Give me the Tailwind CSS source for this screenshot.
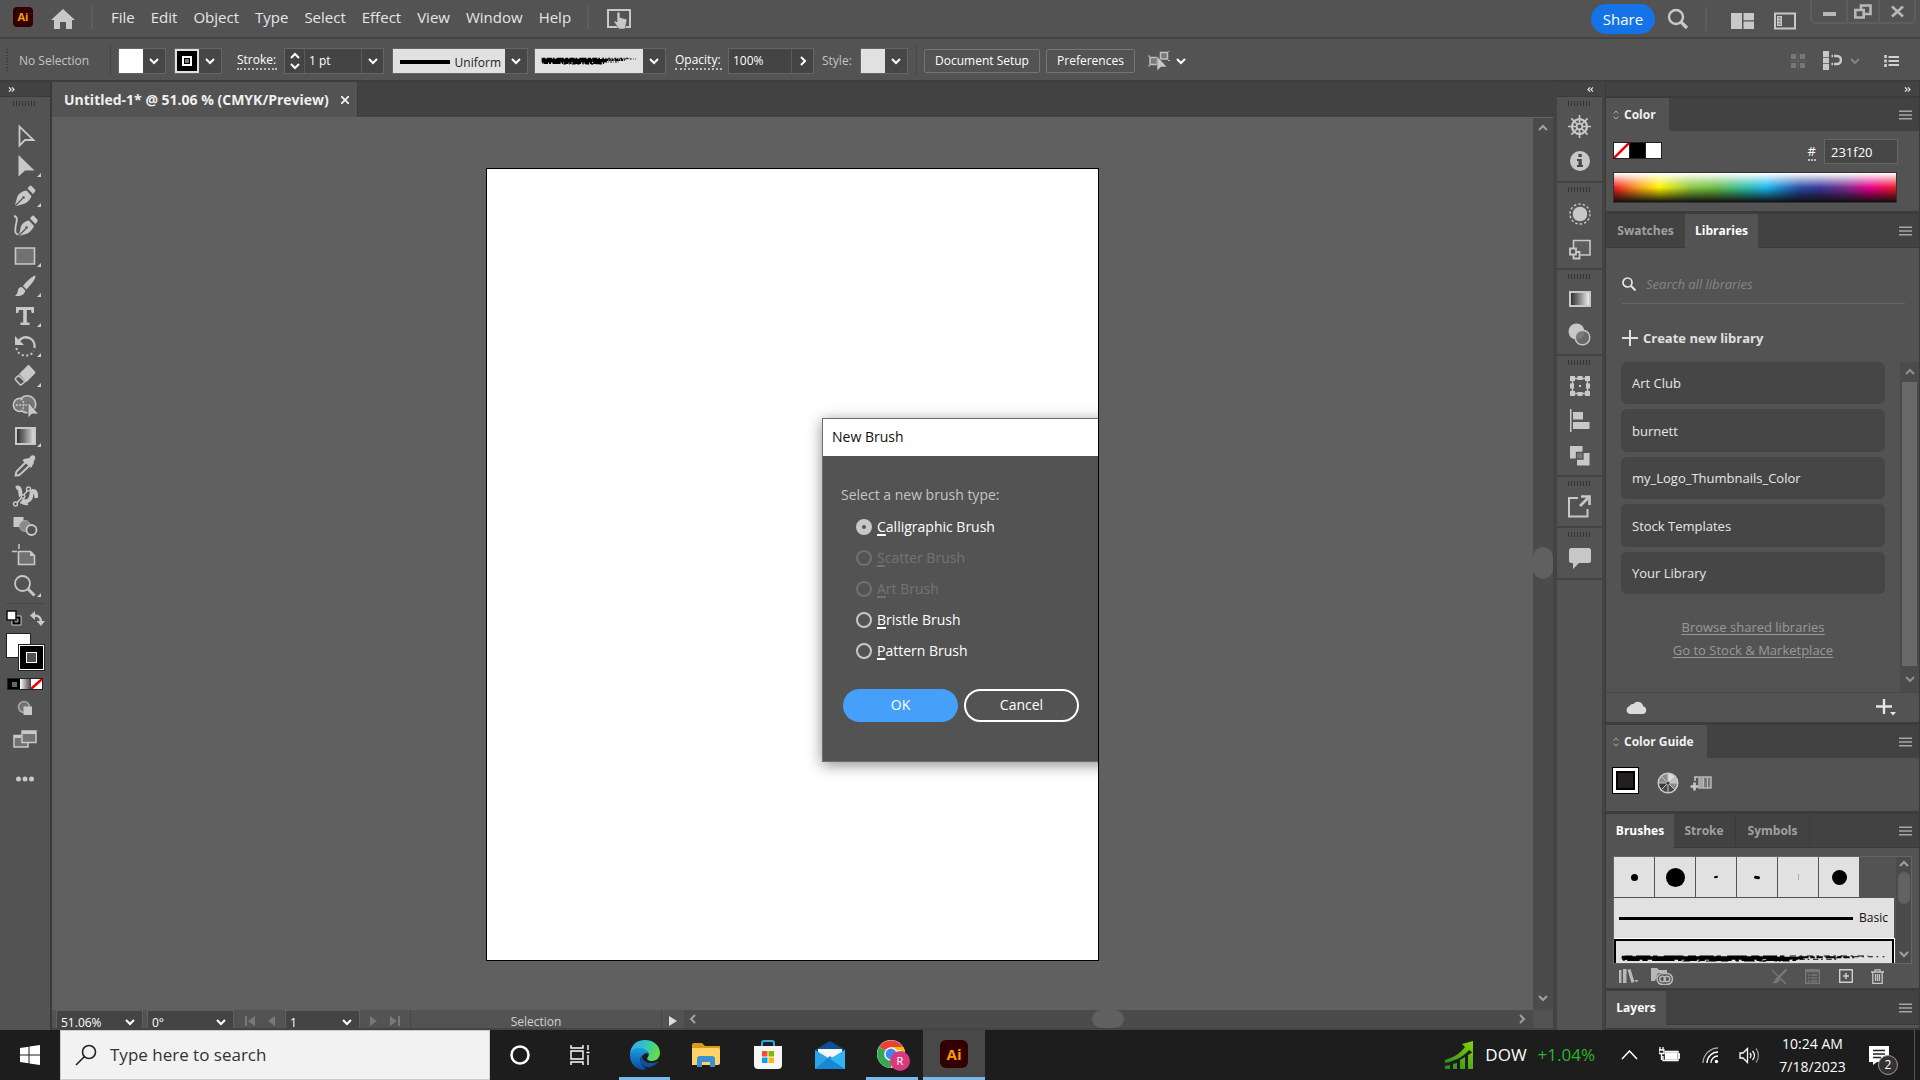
<!DOCTYPE html>
<html lang="en">
<head>
  <meta charset="UTF-8" />
  <meta name="viewport" content="width=device-width, initial-scale=1" />
  <title>Untitled-1* @ 51.06 % (CMYK/Preview)</title>
  <script src="https://cdn.jsdelivr.net/npm/@tailwindcss/browser@4"></script>
</head>
<body class="h-screen overflow-hidden flex flex-col bg-[#535353] text-[#e6e6e6] text-[13px] leading-5 font-['Open_Sans','Noto_Sans',sans-serif]">

  <!-- Shared icons -->
  <svg class="hidden">
    <symbol id="down" viewBox="0 0 10 10"><path d="M1 3l4 4 4-4" fill="none" stroke="currentColor" stroke-width="2"/></symbol>
    <symbol id="up" viewBox="0 0 10 10"><path d="M1 7l4-4 4 4" fill="none" stroke="currentColor" stroke-width="2"/></symbol>
    <symbol id="right" viewBox="0 0 10 10"><path d="M3 1l4 4-4 4" fill="none" stroke="currentColor" stroke-width="2"/></symbol>
    <symbol id="left" viewBox="0 0 10 10"><path d="M7 1L3 5l4 4" fill="none" stroke="currentColor" stroke-width="2"/></symbol>
    <symbol id="dright" viewBox="0 0 8 6"><path d="M1 .5L3.500 3 1 5.500M4.500 .5L7 3 4.500 5.500" fill="none" stroke="currentColor" stroke-width="1.500"/></symbol>
    <symbol id="dleft" viewBox="0 0 8 6"><path d="M3.500 .5L1 3l2.500 2.500M7 .5L4.500 3 7 5.500" fill="none" stroke="currentColor" stroke-width="1.500"/></symbol>
    <symbol id="burger" viewBox="0 0 14 10"><path d="M0 1h14M0 5h14M0 9h14" stroke="currentColor" stroke-width="1.500"/></symbol>
    <symbol id="sort" viewBox="0 0 6 10"><path d="M.7 3.500L3 1l2.300 2.500M.7 6.500L3 9l2.300-2.500" fill="none" stroke="currentColor"/></symbol>
    <symbol id="charcoal" viewBox="0 0 300 12" preserveAspectRatio="none">
      <g stroke="#000" fill="none">
        <path d="M4 6H160" stroke-width="5"/>
        <path d="M2 4l5 2-4 3M160 6h45" stroke-width="4"/>
        <path d="M5 3.500H190" stroke-width="2.500" stroke-dasharray="9 4 16 3 5 7 22 5"/>
        <path d="M8 9H200" stroke-width="3" stroke-dasharray="14 3 6 5 25 4 4 3"/>
        <path d="M70 10.500H190" stroke-width="1.500" stroke-dasharray="8 9 3 6 12 5"/>
        <path d="M200 5H262" stroke-width="3" stroke-dasharray="11 2 5 2 7 3"/>
        <path d="M190 3H278" stroke-width="1.500" stroke-dasharray="7 4 3 5"/>
        <path d="M186 8H245" stroke-width="1.500" stroke-dasharray="6 3 2 4"/>
        <path d="M262 4H296" stroke-width="1.500" stroke-dasharray="5 4 2 5"/>
        <path d="M160 11l12-5M178 11l10-5M195 10l8-5M240 7l8-4" stroke-width="1.500"/>
      </g>
    </symbol>
  </svg>

  <!-- Menu bar -->
  <header class="h-[39px] shrink-0 flex border-b-2 border-[#434343]">
    <div class="flex items-center pb-1 pl-[13px]">
      <div class="size-5 rounded bg-[#330000] text-[#ff9a00] text-[11px] font-bold flex items-center justify-center">Ai</div>
      <button class="ml-[18px]" aria-label="Home">
        <svg class="w-6 h-5 mt-1" viewBox="0 0 24 20" fill="#c8c8c8"><path d="M12 0L0 11h3v9h6v-7h6v7h6v-9h3z"/></svg>
      </button>
      <div class="w-0.5 h-6 bg-[#5e5e5e] ml-4 mr-[18px]"></div>
      <nav class="flex gap-4 text-[15px]">
        <a href="#">File</a><a href="#">Edit</a><a href="#">Object</a><a href="#">Type</a><a href="#">Select</a><a href="#">Effect</a><a href="#">View</a><a href="#">Window</a><a href="#">Help</a>
      </nav>
      <div class="w-0.5 h-6 bg-[#5e5e5e] ml-4 mr-[18px]"></div>
      <button aria-label="Touch workspace">
        <svg class="w-6 h-5 mt-1" viewBox="0 0 24 20"><path d="M1 1h22v17H1z" fill="none" stroke="#c8c8c8" stroke-width="2"/><path d="M10 4.500c0-2 3-2 3 0v4l6 1.500c1 .3 1 1 .8 2L18 20h-6L7 13c0-1.500 2-1.500 3 0z" fill="#c8c8c8" stroke="#535353" stroke-width=".6"/></svg>
      </button>
    </div>
    <div class="ml-auto flex">
      <div class="flex items-center">
        <button class="h-[30px] w-16 rounded-full bg-[#1473e6] text-white text-[15px]">Share</button>
        <button class="ml-3" aria-label="Search"><svg class="size-[22px]" viewBox="0 0 22 22" fill="none" stroke="#c8c8c8"><circle cx="9" cy="9" r="7" stroke-width="2.400"/><path d="M14 14l6 6" stroke-width="3.200"/></svg></button>
        <div class="w-0.5 h-6 bg-[#5e5e5e] ml-4 mr-6"></div>
        <button aria-label="Arrange documents"><svg class="w-[23px] h-4 mt-1" viewBox="0 0 23 16" fill="#c8c8c8"><path d="M0 0h11v16H0zM12.500 0H23v7.200H12.500zM12.500 8.600H23V16H12.500z"/></svg></button>
        <button class="ml-5" aria-label="Workspace"><svg class="w-[22px] h-[18px] mt-1" viewBox="0 0 22 18"><path d="M1 1.500h20v15H1z" fill="none" stroke="#c8c8c8" stroke-width="2"/><path d="M3 4h5v10H3z" fill="#c8c8c8"/><path d="M4.300 6h2.400M4.300 9h2.400M4.300 12h2.400" stroke="#535353" stroke-width="1.200"/></svg></button>
      </div>
      <div class="ml-3.5 mr-1 h-6 flex border-2 border-t-0 border-[#5e5e5e] rounded-b-md text-[#b8b8b8]">
        <button class="w-[34px] flex justify-center items-center" aria-label="Minimize"><svg class="w-[13px] h-3" viewBox="0 0 13 12"><path d="M0 9h13" stroke="currentColor" stroke-width="4"/></svg></button>
        <button class="w-[34px] flex justify-center items-center border-x-2 border-[#5e5e5e]" aria-label="Restore"><svg class="w-[18px] h-[15px]" viewBox="0 0 18 15" fill="none" stroke="currentColor" stroke-width="2.600"><path d="M1.300 6h8.400v7.500H1.300zM7 5V1.500h9.500V10H11"/></svg></button>
        <button class="w-[34px] flex justify-center items-center" aria-label="Close"><svg class="size-[13px]" viewBox="0 0 13 12" stroke="currentColor" stroke-width="2.600"><path d="M1 1l11 10M12 1L1 11"/></svg></button>
      </div>
    </div>
  </header>

  <!-- Control bar -->
  <div class="h-[43px] shrink-0 flex items-center pt-0.5 text-[12px] border-b-2 border-[#3c3c3c]">
    <div class="w-0.5 h-6 ml-1.5 bg-[repeating-linear-gradient(180deg,#3a3a3a_0_1px,transparent_1px_3px)]"></div>
    <span class="ml-[11px] w-[91px] text-[#c4c4c4]">No Selection</span>
    <div class="w-px h-8 bg-[#474747]"></div>
    <button class="ml-[7px] h-[26px] flex border border-[#656565] bg-[#474747] text-white" aria-label="Fill">
      <span class="w-6 h-full bg-white"></span><span class="w-[22px] h-full flex items-center justify-center"><svg class="size-2.5"><use href="#down"/></svg></span>
    </button>
    <button class="ml-2 h-[26px] flex border border-[#656565] bg-[#474747] text-white" aria-label="Stroke color">
      <span class="w-6 h-full bg-black border-2 border-[#e0e0e0] flex items-center justify-center"><span class="size-[10px] border-2 border-white bg-black flex items-center justify-center"><span class="size-1 bg-[#777]"></span></span></span><span class="w-[22px] h-full flex items-center justify-center"><svg class="size-2.5"><use href="#down"/></svg></span>
    </button>
    <label for="stroke" class="ml-[15px] w-10 text-white border-b-2 border-dotted border-[#bdbdbd] leading-4">Stroke:</label>
    <div class="ml-[7px] h-[26px] flex border border-[#656565] bg-[#444] text-white">
      <button class="w-5 flex flex-col items-center justify-between py-0.5 border-r border-[#5a5a5a]" aria-label="Step weight"><svg class="size-2.5"><use href="#up"/></svg><svg class="size-2.5"><use href="#down"/></svg></button>
      <input id="stroke" class="w-14 px-1 outline-none" value="1 pt" />
      <button class="w-[22px] flex items-center justify-center border-l border-[#5a5a5a]" aria-label="Weight list"><svg class="size-2.5"><use href="#down"/></svg></button>
    </div>
    <button class="ml-2 h-[26px] flex border border-[#656565] bg-[#474747] text-white">
      <span class="w-28 h-full pl-[7px] pr-1 flex items-end justify-between bg-[#e1e1e1] text-[#222]"><span class="w-[50px] h-1 mb-[9px] bg-black"></span>Uniform</span><span class="w-[22px] h-full flex items-center justify-center"><svg class="size-2.5"><use href="#down"/></svg></span>
    </button>
    <button class="ml-1.5 h-[26px] flex border border-[#656565] bg-[#474747] text-white" aria-label="Brush definition">
      <span class="w-[108px] h-full px-1.5 flex items-center bg-[#e1e1e1]"><svg class="w-24 h-[9px]"><use href="#charcoal"/></svg></span><span class="w-[22px] h-full flex items-center justify-center"><svg class="size-2.5"><use href="#down"/></svg></span>
    </button>
    <label for="opacity" class="ml-[9px] w-[47px] text-white border-b-2 border-dotted border-[#bdbdbd] leading-4">Opacity:</label>
    <div class="ml-1.5 h-[26px] flex border border-[#656565] bg-[#444] text-white">
      <input id="opacity" class="w-[62px] px-1 outline-none" value="100%" />
      <button class="w-[22px] flex items-center justify-center border-l border-[#5a5a5a]" aria-label="Opacity slider"><svg class="size-2.5"><use href="#right"/></svg></button>
    </div>
    <span class="ml-2 w-[38px] text-[#c4c4c4]">Style:</span>
    <button class="h-[26px] flex border border-[#656565] bg-[#474747] text-white" aria-label="Graphic style">
      <span class="w-6 h-full bg-[#e1e1e1]"></span><span class="w-[22px] h-full flex items-center justify-center"><svg class="size-2.5"><use href="#down"/></svg></span>
    </button>
    <div class="w-px h-8 bg-[#474747] ml-2 mr-[7px]"></div>
    <button class="h-6 w-[116px] border border-[#757575] rounded-xs text-white">Document Setup</button>
    <button class="ml-1.5 h-6 w-[89px] border border-[#757575] rounded-xs text-white">Preferences</button>
    <button class="ml-[13px] flex items-center gap-1.5 text-white" aria-label="Select similar">
      <svg class="w-[22px] h-5" viewBox="0 0 22 20"><g fill="#7a7a7a" stroke="#c0c0c0" stroke-width="1.500"><path d="M2 6.500h7v7H2zM12.500 1.500h7v6.500h-7z"/></g><path d="M0 5h2M0 15h2M20 0h2M20 9.500h2" stroke="#c0c0c0"/><path d="M9 5v15l4-4h6z" fill="#c8c8c8" stroke="#535353" stroke-width=".6"/></svg>
      <svg class="size-2.5"><use href="#down"/></svg>
    </button>
    <div class="ml-auto mr-[21px] flex items-center">
      <svg class="size-[18px]" viewBox="0 0 18 18" fill="#777"><path d="M2 2h5v5H2zM11 2h5v5h-5zM2 11h5v5H2zM11 11h5v5h-5z"/><path d="M9 0v18M0 9h18" stroke="#676767"/></svg>
      <svg class="ml-4 w-[19px] h-[19px]" viewBox="0 0 19 19" fill="#c8c8c8"><path d="M0 0h6v6H0zM0 6.700h6v5.600H0zM0 13h6v6H0z"/><path d="M8.500 5H14a4 4 0 0 1 0 8H8.500" fill="none" stroke="#c8c8c8" stroke-width="2.600"/><path d="M10.500 3v4M10.500 11v4" stroke="#535353"/></svg>
      <svg class="ml-2 size-2.5 text-[#858585]"><use href="#down"/></svg>
      <svg class="ml-6 w-[15px] h-3" viewBox="0 0 15 12" fill="none" stroke="#d0d0d0"><path d="M4.500 2H15M4.500 6H15M4.500 10H15" stroke-width="1.800"/><path d="M1.500 0v12" stroke-width="2.600" stroke-dasharray="3 1.500"/></svg>
    </div>
  </div>

  <main class="flex-1 min-h-0 flex">

    <!-- Tools -->
    <aside class="w-[52px] shrink-0 flex flex-col items-center border-r-2 border-[#3a3a3a]">
      <div class="w-full h-[15px] flex items-center pl-2 bg-[#434343] border-b border-[#3a3a3a]"><svg class="w-[7px] h-[5px] text-[#ddd]"><use href="#dright"/></svg></div>
      <div class="w-6 h-[5px] mt-1 mb-[15px] bg-[repeating-linear-gradient(90deg,#333_0_1px,transparent_1px_3px)]"></div>
      <div id="tools" class="w-full flex flex-col text-[#c8c8c8]">
        <button class="relative h-[30px] flex items-center justify-center" aria-label="Selection"><svg class="size-6" viewBox="0 0 24 24" fill="none" stroke="currentColor" stroke-width="1.800"><path d="M6.500 2.500v19l5.500-5.500h8.500z"/></svg></button>
        <button data-more class="relative h-[30px] flex items-center justify-center" aria-label="Direct Selection"><svg class="size-6" viewBox="0 0 24 24" fill="currentColor"><path d="M5.500 1v21.500l6.500-6h9.500z"/></svg></button>
        <button data-more class="relative h-[30px] flex items-center justify-center" aria-label="Pen"><svg class="size-6" viewBox="0 0 24 24"><path d="M2 21L4.500 12Q8 7 13.500 6.500L18.500 12Q17 17 12 19.500L3.500 22z" fill="currentColor"/><path d="M2.500 21.500l7-7" stroke="#535353" stroke-width="1.200"/><circle cx="10.500" cy="13.500" r="1.300" fill="#535353"/><path d="M14.500 4.500l2-2.500q1-.8 2 0L22 5.500q.8 1 0 2L20 10z" fill="currentColor"/></svg></button>
        <button class="relative h-[30px] flex items-center justify-center" aria-label="Curvature"><svg class="w-[26px] h-6" viewBox="0 0 26 24"><path d="M2 2c5 1 2 7 1.500 11C3 18 3 20 6.500 20.500" fill="none" stroke="currentColor" stroke-width="1.800"/><path d="M7 20.500L9 12q3-5 8-5.500l5 5.500q-2 5-6.500 7.500L7 22z" fill="currentColor"/><path d="M7 21.500l7-7" stroke="#535353" stroke-width="1.200"/><circle cx="14.500" cy="13.500" r="1.300" fill="#535353"/><path d="M18 4.500L20 2q1-.8 2 0l3.300 3.500q.8 1 0 2L23.500 10z" fill="currentColor"/></svg></button>
        <button data-more class="relative h-[30px] flex items-center justify-center" aria-label="Rectangle"><svg class="size-6" viewBox="0 0 24 24"><path d="M2.500 4h19v16h-19z" fill="#727272" stroke="currentColor" stroke-width="1.600"/></svg></button>
        <button data-more class="relative h-[30px] flex items-center justify-center" aria-label="Paintbrush"><svg class="size-6" viewBox="0 0 24 24" fill="currentColor"><path d="M22.500 1.500c-4 1-9 6-12.500 10.500l3.500 3.500C17.500 11 22.500 6 22.500 1.500zM9 13c-3 0-4 2-4.300 4.500-.3 2-1.200 3-2.700 4 4 1.500 9.500 0 10.300-5z"/></svg></button>
        <button data-more class="relative h-[30px] flex items-center justify-center" aria-label="Type"><svg class="size-6" viewBox="0 0 24 24" fill="currentColor"><path d="M3 3h18v6h-2.200L18 6h-4.200v12.500h2.700V21h-9v-2.500h2.700V6H6l-.8 3H3z"/></svg></button>
        <button data-more class="relative h-[30px] flex items-center justify-center" aria-label="Rotate"><svg class="size-6" viewBox="0 0 24 24" fill="none" stroke="currentColor"><path d="M5 8C11-1 23 4 21.500 14" stroke-width="2.400"/><path d="M2 2v9h9z" fill="currentColor" stroke="none"/><path d="M3.500 14c1 9 14 10 17.500 3" stroke-width="2" stroke-dasharray="2 2.500"/></svg></button>
        <button data-more class="relative h-[30px] flex items-center justify-center" aria-label="Eraser"><svg class="size-6" viewBox="0 0 24 24"><path d="M14.500 1.500q1-1 2 0l5.500 6q1 1 0 2L13.500 18 6 10z" fill="currentColor"/><path d="M5.500 11.500L2.800 14q-1 1 0 2l4 4.500q.8.800 1.800 0l3.400-3z" fill="none" stroke="currentColor" stroke-width="1.600"/></svg></button>
        <button class="relative h-[30px] flex items-center justify-center" aria-label="Shape Builder"><svg class="w-[26px] h-6 overflow-visible" viewBox="0 0 26 24"><path d="M9 4.500a6.500 6.500 0 1 0 1 12.500 8.500 8.500 0 1 0-1-12.500z" fill="#777" stroke="currentColor" stroke-width="1.600"/><path d="M9 4.500q5 5 1 12M4 11h12" fill="none" stroke="currentColor" stroke-width="1.400" stroke-dasharray="2 1.200"/><path d="M16 8v16l4-4h6.500z" fill="currentColor" stroke="#535353" stroke-width=".8"/></svg></button>
        <button data-more class="relative h-[30px] flex items-center justify-center" aria-label="Gradient"><span class="w-[21px] h-[18px] border-2 border-[#c8c8c8] bg-linear-to-r from-[#333] to-[#ddd]"></span></button>
        <button class="relative h-[30px] flex items-center justify-center" aria-label="Eyedropper"><svg class="size-6" viewBox="0 0 24 24"><path d="M12.500 8.500L4 17q-1 1-1.500 4.500Q6 21.500 7 20.500l9-8.500" fill="none" stroke="currentColor" stroke-width="1.800"/><path d="M14 4.500q1-1 2 0c1-2 3-4 5-3s1.500 4-.5 6q1 1 0 2L18 14 9.500 6.500 11 5z" fill="currentColor"/></svg></button>
        <button class="relative h-[30px] flex items-center justify-center" aria-label="Puppet Warp"><svg class="w-[26px] h-6" viewBox="0 0 26 24"><path d="M4 4c5-2 4 5 5 9s4 6 8 3 1-8 4-9c3 0 3 3 3.500 7" fill="none" stroke="currentColor" stroke-width="4"/><path d="M8 18q4 3 8 2" fill="none" stroke="currentColor" stroke-width="2"/><path d="M4 20L16 6" stroke="#535353" stroke-width="3.500"/><path d="M4 20L16 6" stroke="currentColor" stroke-width="1.500"/><g fill="#535353" stroke="currentColor" stroke-width="1.400"><circle cx="3.500" cy="20" r="2"/><circle cx="11" cy="12.500" r="1.800"/><circle cx="16.500" cy="5" r="2"/></g></svg></button>
        <button class="relative h-[30px] flex items-center justify-center" aria-label="Blend"><svg class="w-[26px] h-6" viewBox="0 0 26 24"><path d="M1.500 3h10v10h-10z" fill="currentColor"/><circle cx="13" cy="12" r="5.500" fill="#8a8a8a" stroke="#a5a5a5"/><circle cx="19.500" cy="16" r="5" fill="#535353" stroke="currentColor" stroke-width="1.800"/></svg></button>
        <button class="relative h-[30px] flex items-center justify-center" aria-label="Artboard"><svg class="w-[26px] h-6" viewBox="0 0 26 24"><path d="M6.500 7.500h12l4 4v9h-16z" fill="#727272" stroke="currentColor" stroke-width="1.600"/><path d="M18 7v5h5z" fill="currentColor"/><path d="M0 7.500h5M7 0v5" stroke="currentColor" stroke-width="1.500"/></svg></button>
        <button data-more class="relative h-[30px] flex items-center justify-center" aria-label="Zoom"><svg class="size-6" viewBox="0 0 24 24" fill="none" stroke="currentColor"><circle cx="9.500" cy="9.500" r="7.500" stroke-width="1.800"/><path d="M15 15l6.500 6.500" stroke-width="3"/></svg></button>
      </div>
      <div class="w-[38px] h-px mt-0.5 bg-[#474747]"></div>
      <div class="w-10 mt-1.5 pl-px flex justify-between">
        <button aria-label="Default colors"><svg class="size-4" viewBox="0 0 16 16"><path d="M6 6h9v9H6z" fill="#000" stroke="#c8c8c8"/><path d="M9 9h3v3H9z" fill="#535353" stroke="#c8c8c8" stroke-width=".8"/><path d="M1 1h9v9H1z" fill="#fff" stroke="#111" stroke-width="1.500"/></svg></button>
        <button aria-label="Swap colors"><svg class="size-[15px]" viewBox="0 0 15 15"><path d="M4 4.500c5 0 7 2 7 7" fill="none" stroke="#c8c8c8" stroke-width="2.500"/><path d="M5 0v9L0 4.500zM6.500 10H15l-4 5z" fill="#c8c8c8"/></svg></button>
      </div>
      <div class="relative w-[38px] h-[37px] mt-[7px]">
        <div class="absolute left-0 top-0 size-[25px] bg-white border border-[#222]"></div>
        <div class="absolute right-0 bottom-0 size-[25px] bg-black border border-white p-[6px] outline outline-[#222]"><div class="size-full border border-white bg-[#535353]"></div></div>
      </div>
      <div class="w-9 h-3 mt-2 flex border border-[#222] bg-black">
        <div class="w-3 flex items-center justify-center"><div class="size-[5px] bg-[#666]"></div></div>
        <div class="w-[11px] bg-linear-to-r from-white to-[#444]"></div>
        <svg class="flex-1" viewBox="0 0 11 10" preserveAspectRatio="none"><path d="M0 0h11v10H0z" fill="#fff"/><path d="M0 10L11 0" stroke="#e00" stroke-width="2.500"/></svg>
      </div>
      <button class="mt-2.5" aria-label="Drawing mode"><svg class="size-4" viewBox="0 0 16 16"><circle cx="7" cy="7" r="5.500" fill="#727272" stroke="#a5a5a5" stroke-width="1.600"/><path d="M6.500 6.500H15V15H6.500z" fill="#c8c8c8"/></svg></button>
      <button class="mt-3.5" aria-label="Screen mode"><svg class="w-6 h-[18px]" viewBox="0 0 24 18" fill="#727272" stroke="#c8c8c8" stroke-width="1.500"><path d="M1 5.500h14v11.500H1z"/><path d="M9 1h14v11.500H9z"/><path d="M1 6.500h7M9 2.500h14" stroke-width="3"/></svg></button>
      <button class="mt-7" aria-label="Edit toolbar"><svg class="w-[18px] h-[6px]" viewBox="0 0 18 6" fill="#c8c8c8"><circle cx="2.500" cy="3" r="2.500"/><circle cx="9" cy="3" r="2.500"/><circle cx="15.500" cy="3" r="2.500"/></svg></button>
    </aside>

    <!-- Document -->
    <section class="flex-1 min-w-0 flex flex-col">
      <div class="h-9 shrink-0 flex bg-[#424242] border-b border-[#636363]">
        <div class="flex items-center gap-3 pl-3 pr-2 bg-[#535353] border-r border-[#3a3a3a] font-bold text-[14px] text-[#f0f0f0]">
          Untitled-1* @ 51.06 % (CMYK/Preview)
          <button aria-label="Close document"><svg class="size-2" viewBox="0 0 8 8" stroke="currentColor" stroke-width="1.800"><path d="M0 0l8 8M8 0L0 8"/></svg></button>
        </div>
      </div>
      <div class="flex-1 min-h-0 flex">
        <div class="flex-1 bg-[#606060] flex items-center justify-center">
          <div class="relative w-[613px] h-[793px] bg-white border border-black overflow-hidden">

            <!-- New Brush dialog -->
            <form class="absolute left-[335px] top-[249px] w-[300px] h-[344px] bg-[#535353] border border-[#6e6e6e] shadow-[0_3px_14px_rgba(0,0,0,0.45)] text-white text-[14px]">
              <h2 class="h-[37px] bg-white text-[#111] pl-[9px] flex items-center">New Brush</h2>
              <fieldset class="pl-[18px] pt-[29px]" aria-labelledby="brush-type">
                <p id="brush-type" class="text-[#c4c4c4]">Select a new brush type:</p>
                <div class="pl-[15px] pt-[7px] flex flex-col">
                  <label class="h-[31px] flex items-center gap-[5px]"><input type="radio" name="brush" checked class="appearance-none size-4 rounded-full border-[#c8c8c8] border-[6px]" /><span><u class="decoration-2 underline-offset-2">C</u>alligraphic Brush</span></label>
                  <label class="h-[31px] flex items-center gap-[5px] text-[#737373]"><input type="radio" name="brush" disabled class="appearance-none size-4 rounded-full border-2 border-[#707070]" /><span><u class="decoration-2 underline-offset-2">S</u>catter Brush</span></label>
                  <label class="h-[31px] flex items-center gap-[5px] text-[#737373]"><input type="radio" name="brush" disabled class="appearance-none size-4 rounded-full border-2 border-[#707070]" /><span><u class="decoration-2 underline-offset-2">A</u>rt Brush</span></label>
                  <label class="h-[31px] flex items-center gap-[5px]"><input type="radio" name="brush" class="appearance-none size-4 rounded-full border-2 border-[#c8c8c8]" /><span><u class="decoration-2 underline-offset-2">B</u>ristle Brush</span></label>
                  <label class="h-[31px] flex items-center gap-[5px]"><input type="radio" name="brush" class="appearance-none size-4 rounded-full border-2 border-[#c8c8c8]" /><span><u class="decoration-2 underline-offset-2">P</u>attern Brush</span></label>
                </div>
              </fieldset>
              <div class="flex gap-1.5 pl-5 pt-[22px]">
                <button type="button" class="w-[115px] h-[33px] rounded-full bg-[#469ff8]">OK</button>
                <button type="button" class="w-[115px] h-[33px] rounded-full border-2 border-white">Cancel</button>
              </div>
            </form>
          </div>
        </div>
        <div class="w-5 bg-[#4b4b4b] flex flex-col items-center justify-between pt-[5px] pb-[7px] text-[#a0a0a0]">
          <svg class="size-2.5"><use href="#up"/></svg>
          <div class="w-5 h-8 rounded-full bg-[#606060]"></div>
          <svg class="size-2.5"><use href="#down"/></svg>
        </div>
      </div>
      <div class="h-5 shrink-0 flex items-stretch text-[12px] border-b-2 border-[#444] overflow-hidden">
        <div class="relative ml-1 w-[87px] bg-[#444] border border-b-0 border-[#606060] text-white">
          <select aria-label="Zoom" class="appearance-none w-full pl-1 pt-0.5 outline-none"><option>51.06%</option></select>
          <svg class="absolute right-[7px] top-[6px] size-2.5"><use href="#down"/></svg>
        </div>
        <div class="relative ml-1 w-[87px] bg-[#444] border border-b-0 border-[#606060] text-white">
          <select aria-label="Rotation" class="appearance-none w-full pl-1 pt-0.5 outline-none"><option>0°</option></select>
          <svg class="absolute right-[7px] top-[6px] size-2.5"><use href="#down"/></svg>
        </div>
        <div class="w-[51px] flex items-center justify-center gap-3 pt-1">
          <svg class="w-3 h-2.5" viewBox="0 0 12 10" fill="#787878"><path d="M1 0h2v10H1zM11 0v10L4 5z"/></svg>
          <svg class="w-2 h-2.5" viewBox="0 0 8 10" fill="#787878"><path d="M7 0v10L0 5z"/></svg>
        </div>
        <div class="relative w-[75px] bg-[#444] border border-b-0 border-[#606060] text-white">
          <select aria-label="Artboard number" class="appearance-none w-full pl-1 pt-0.5 outline-none"><option>1</option></select>
          <svg class="absolute right-[7px] top-[6px] size-2.5"><use href="#down"/></svg>
        </div>
        <div class="w-[51px] flex items-center justify-center gap-3 pt-1 border-r border-[#474747]">
          <svg class="w-2 h-2.5" viewBox="0 0 8 10" fill="#787878"><path d="M1 0v10l7-5z"/></svg>
          <svg class="w-3 h-2.5" viewBox="0 0 12 10" fill="#787878"><path d="M9 0h2v10H9zM1 0v10l7-5z"/></svg>
        </div>
        <span class="w-[251px] text-center pt-0.5 text-[#d0d0d0] border-r border-[#474747]">Selection</span>
        <div class="w-[22px] flex items-center justify-center pt-1"><svg class="w-2 h-2.5" viewBox="0 0 8 10" fill="#ddd"><path d="M0 0v10l8-5z"/></svg></div>
        <div class="flex-1 flex items-center justify-between pl-1 pr-1.5 bg-[#4b4b4b] text-[#a0a0a0]">
          <svg class="size-2.5"><use href="#left"/></svg>
          <div class="w-8 h-full rounded-full bg-[#606060]"></div>
          <svg class="size-2.5"><use href="#right"/></svg>
        </div>
        <div class="w-5"></div>
      </div>
    </section>

    <!-- Collapsed panels -->
    <aside class="w-[52px] shrink-0 border-l-4 border-r-3 border-[#434343] flex flex-col text-[#c8c8c8]">
      <div class="h-[15px] flex items-center justify-end pr-2 bg-[#434343] border-b border-[#3a3a3a]"><svg class="w-[7px] h-[5px] text-[#ddd]"><use href="#dleft"/></svg></div>
      <div class="h-[86px] border-b-2 border-[#434343] flex flex-col items-center">
        <div class="w-6 h-[5px] mt-1 mb-[9px] bg-[repeating-linear-gradient(90deg,#333_0_1px,transparent_1px_3px)]"></div>
        <svg class="size-[23px]" viewBox="0 0 24 24" fill="none" stroke="currentColor"><circle cx="12" cy="12" r="7.800" stroke-width="2.400"/><circle cx="12" cy="12" r="3" stroke-width="1.800"/><path d="M12 0v9M12 15v9M0 12h9M15 12h9M3.500 3.500l6.400 6.400M14 14l6.400 6.400M20.500 3.500l-6.400 6.400M10 14l-6.500 6.500" stroke-width="1.700"/></svg>
        <svg class="mt-[13px] size-[20px]" viewBox="0 0 20 20"><circle cx="10" cy="10" r="10" fill="currentColor"/><path d="M8.500 3h3.200v3H8.500zM7 8h4.800v6H13v2H7v-2h1.500v-4H7z" fill="#474747"/></svg>
      </div>
      <div class="h-[87px] border-b-2 border-[#434343] flex flex-col items-center">
        <div class="w-6 h-[5px] mt-1 mb-[11px] bg-[repeating-linear-gradient(90deg,#333_0_1px,transparent_1px_3px)]"></div>
        <svg class="size-[22px]" viewBox="0 0 22 22"><circle cx="11" cy="11" r="7.300" fill="currentColor"/><circle cx="11" cy="11" r="10" fill="none" stroke="currentColor" stroke-width="1.400" stroke-dasharray="2.500 2"/></svg>
        <svg class="mt-3.5 w-[22px] h-[21px]" viewBox="0 0 22 21"><path d="M4.500 1.500h16.500V16H4.500z" fill="#5e5e5e" stroke="currentColor" stroke-width="1.600"/><path d="M4.500 13h6v6.500h-6z" fill="#535353" stroke="currentColor" stroke-width="1.800"/><path d="M1 9.500h6v6H1z" fill="#535353" stroke="currentColor" stroke-width="1.800"/></svg>
      </div>
      <div class="h-[86px] border-b-2 border-[#434343] flex flex-col items-center">
        <div class="w-6 h-[5px] mt-1 mb-3 bg-[repeating-linear-gradient(90deg,#333_0_1px,transparent_1px_3px)]"></div>
        <div class="w-[22px] h-4 border-2 border-[#c8c8c8] bg-linear-to-r from-[#333] to-[#eee]"></div>
        <svg class="mt-4 size-[23px]" viewBox="0 0 23 23"><circle cx="8.500" cy="8.500" r="8" fill="currentColor"/><circle cx="14.500" cy="14.500" r="7.300" fill="#6e6e6e" fill-opacity=".85" stroke="currentColor" stroke-width="1.400"/></svg>
      </div>
      <div class="h-[121px] border-b-2 border-[#434343] flex flex-col items-center">
        <div class="w-6 h-[5px] mt-1 mb-[11px] bg-[repeating-linear-gradient(90deg,#333_0_1px,transparent_1px_3px)]"></div>
        <svg class="size-[20px]" viewBox="0 0 20 20" fill="currentColor"><path d="M2.500 2.500h15v15h-15z" fill="none" stroke="currentColor" stroke-width="1.500"/><path d="M0 0h5v5H0zM7.500 0h5v4h-5zM15 0h5v5h-5zM0 7.500h4v5H0zM16 7.500h4v5h-4zM0 15h5v5H0zM7.500 16h5v4h-5zM15 15h5v5h-5zM9 9h2v2H9z"/></svg>
        <svg class="mt-[13px] w-[20px] h-[23px]" viewBox="0 0 20 23" fill="currentColor"><path d="M0 0h1.500v23H0zM3 3h10v7.500H3zM3 13h16.500v7H3z"/></svg>
        <svg class="mt-3.5 size-[20px]" viewBox="0 0 20 20"><path d="M0 0h12.500v12.500H0zM7 7h12.500v12.500H7z" fill="currentColor"/><path d="M6.500 6.500h6.500v6.500H6.500z" fill="#777" stroke="#535353" stroke-width="1.300"/></svg>
      </div>
      <div class="h-[51px] border-b-2 border-[#434343] flex flex-col items-center">
        <div class="w-6 h-[5px] mt-1 mb-[9px] bg-[repeating-linear-gradient(90deg,#333_0_1px,transparent_1px_3px)]"></div>
        <svg class="size-[23px]" viewBox="0 0 23 23" fill="none" stroke="currentColor" stroke-width="2"><path d="M10 3H1v18.500h18.500V14"/><path d="M12 11l8-8" stroke-width="2.600"/><path d="M13 1.500h8.500V10" stroke-width="2.600"/></svg>
      </div>
      <div class="h-[52px] border-b-2 border-[#434343] flex flex-col items-center">
        <div class="w-6 h-[5px] mt-1 mb-[11px] bg-[repeating-linear-gradient(90deg,#333_0_1px,transparent_1px_3px)]"></div>
        <svg class="w-[22px] h-[21px]" viewBox="0 0 22 21" fill="currentColor"><path d="M2.500 0h17Q22 0 22 2.500v10q0 2.500-2.500 2.500H10l-6 6v-6H2.500Q0 15 0 12.500v-10Q0 0 2.500 0z"/></svg>
      </div>
    </aside>

    <!-- Panels -->
    <aside class="w-[315px] shrink-0 flex flex-col border-x border-[#3a3a3a] text-[12px]">
      <div class="h-4 flex items-center justify-end pr-2 bg-[#434343] border-b-2 border-[#3a3a3a]"><svg class="w-[7px] h-[5px] text-[#ddd]"><use href="#dright"/></svg></div>

      <!-- Color -->
      <div class="h-[116px] border-b-3 border-[#3c3c3c]">
        <div class="h-[33px] flex items-stretch bg-[#424242] font-bold">
          <button class="w-[63px] pl-[7px] flex items-center gap-[5px] bg-[#535353] text-[#f0f0f0]"><svg class="w-1.5 h-2.5 text-[#b0b0b0]"><use href="#sort"/></svg>Color</button>
          <button class="ml-auto mr-[7px] text-[#a5a5a5]" aria-label="Color menu"><svg class="w-[13px] h-2.5"><use href="#burger"/></svg></button>
        </div>
        <div class="flex items-center pl-[7px] pr-[21px] pt-2">
          <div class="self-start mt-[3px] h-[17px] flex gap-px border border-[#222] bg-[#222]">
            <svg class="size-[15px]" viewBox="0 0 15 15"><path d="M0 0h15v15H0z" fill="#fff"/><path d="M0 15L15 0" stroke="#e00" stroke-width="2.500"/></svg>
            <div class="size-[15px] bg-black"></div>
            <div class="size-[15px] bg-white"></div>
          </div>
          <label for="hex" class="ml-auto mr-2 border-b-2 border-dotted border-[#bdbdbd] text-white text-[13px] leading-4">#</label>
          <input id="hex" class="w-[74px] h-[25px] px-1.5 border border-[#656565] bg-[#474747] text-white text-[13px]" value="231f20" />
        </div>
        <div class="ml-[7px] mr-[22px] mt-2 h-[31px] border border-[#333] bg-[linear-gradient(180deg,#fff_0%,rgba(255,255,255,0.6)_20%,transparent_50%,rgba(0,0,0,0.45)_75%,#111_100%),linear-gradient(90deg,#ed1c24_0%,#f7931e_8%,#fff200_16%,#8cc63f_27%,#6cbd45_36%,#3fbf8f_44%,#1ab7ef_54%,#2b4ea2_66%,#3b3a9b_73%,#7b2f91_82%,#ec008c_91%,#ed1c24_100%)]"></div>
      </div>

      <!-- Libraries -->
      <div class="h-[511px] flex flex-col border-b-3 border-[#3c3c3c]">
        <div class="h-[34px] flex items-stretch bg-[#424242] border-b border-[#3a3a3a] font-bold">
          <button class="w-[79px] text-[#a0a0a0]">Swatches</button>
          <button class="w-[73px] -mb-px bg-[#535353] text-white">Libraries</button>
          <button class="ml-auto mr-[7px] text-[#a5a5a5]" aria-label="Libraries menu"><svg class="w-[13px] h-2.5"><use href="#burger"/></svg></button>
        </div>
        <div class="ml-4 mr-3.5 mt-[17px] h-[39px] flex items-center gap-2.5 border-b border-[#666]">
          <svg class="size-3.5" viewBox="0 0 14 14" fill="none" stroke="#e6e6e6"><circle cx="5.500" cy="5.500" r="4.500" stroke-width="1.700"/><path d="M9 9l4.500 4.500" stroke-width="2"/></svg>
          <input aria-label="Search all libraries" placeholder="Search all libraries" class="flex-1 text-[13px] italic outline-none placeholder:text-[#858585]" />
        </div>
        <button class="ml-4 mt-6 flex items-center gap-[5px] text-[13px] font-bold text-[#e0e0e0]">
          <svg class="size-4" viewBox="0 0 16 16" stroke="currentColor" stroke-width="2"><path d="M8 0v16M0 8h16"/></svg>Create new library
        </button>
        <div class="flex-1 min-h-0 mt-3.5 flex text-[13px]">
          <div class="flex-1 pl-[15px] pr-[15px] flex flex-col">
            <ul class="flex flex-col gap-[5px]">
              <li class="h-[42px] pl-[11px] flex items-center rounded-md bg-[#464646]">Art Club</li>
              <li class="h-[43px] pl-[11px] flex items-center rounded-md bg-[#464646]">burnett</li>
              <li class="h-[42px] pl-[11px] flex items-center rounded-md bg-[#464646]">my_Logo_Thumbnails_Color</li>
              <li class="h-[43px] pl-[11px] flex items-center rounded-md bg-[#464646]">Stock Templates</li>
              <li class="h-[42px] pl-[11px] flex items-center rounded-md bg-[#464646]">Your Library</li>
            </ul>
            <div class="mt-[23px] flex flex-col items-center gap-[3px] text-[#999] underline underline-offset-2">
              <a href="#">Browse shared libraries</a>
              <a href="#">Go to Stock &amp; Marketplace</a>
            </div>
          </div>
          <div class="w-[19px] flex flex-col items-center bg-[#4b4b4b] text-[#909090]">
            <svg class="my-[5px] size-2.5"><use href="#up"/></svg>
            <div class="w-[15px] flex-1 bg-[#696969]"></div>
            <svg class="my-2 size-2.5"><use href="#down"/></svg>
          </div>
        </div>
        <div class="h-[30px] shrink-0 flex items-center justify-between pl-5 pr-[23px] pb-0.5 border-t border-[#474747]">
          <svg class="w-[21px] h-[14px]" viewBox="0 0 21 14" fill="#dcdcdc"><path d="M4 14a4 4 0 0 1-.5-7.800A4 4 0 0 1 7.500 4a5.500 5.500 0 0 1 9.700 2.200A4 4 0 0 1 17 14z"/></svg>
          <button aria-label="Add content"><svg class="w-5 h-[18px]" viewBox="0 0 20 18"><path d="M8 1v15M0 8.500h16" stroke="#e6e6e6" stroke-width="2.400"/><path d="M14 14h6l-3 3.500z" fill="#e6e6e6"/></svg></button>
        </div>
      </div>

      <!-- Color Guide -->
      <div class="h-[89px] border-b-3 border-[#3c3c3c]">
        <div class="h-[33px] flex items-stretch bg-[#424242] font-bold">
          <button class="w-[101px] pl-[7px] flex items-center gap-[5px] bg-[#535353] text-[#f0f0f0] whitespace-nowrap"><svg class="w-1.5 h-2.5 shrink-0 text-[#b0b0b0]"><use href="#sort"/></svg>Color Guide</button>
          <button class="ml-auto mr-[7px] text-[#a5a5a5]" aria-label="Color Guide menu"><svg class="w-[13px] h-2.5"><use href="#burger"/></svg></button>
        </div>
        <div class="flex items-start pl-1.5 pt-[9px]">
          <div class="size-[27px] border border-black bg-white p-[3px]"><div class="size-full border-2 border-black bg-[#231f20]"></div></div>
          <svg class="ml-[18px] mt-[5px] size-[22px]" viewBox="0 0 22 22"><circle cx="11" cy="11" r="9.800" fill="#8a8a8a"/><path d="M11 11V1a10 10 0 0 1 7 3z" fill="#ddd"/><path d="M11 11l7-7a10 10 0 0 1 3 7z" fill="#c0c0c0"/><path d="M11 11L4 18a10 10 0 0 0 7 3zM11 11l7 7a10 10 0 0 1-7 3z" fill="#4a4a4a"/><path d="M11 11H1a10 10 0 0 0 3 7z" fill="#3a3a3a"/><path d="M11 1v20M1 11h20M4 4l14 14M18 4L4 18" stroke="#c8c8c8"/><circle cx="11" cy="11" r="9.800" fill="none" stroke="#c8c8c8" stroke-width="1.500"/><circle cx="11" cy="11" r="1.500" fill="#444"/></svg>
          <svg class="ml-[11px] mt-2 w-[22px] h-[16px]" viewBox="0 0 22 16"><path d="M9 2h12v11H9z" fill="#777" stroke="#b8b8b8" stroke-width="1.500"/><path d="M9.500 2.500h4v10h-4z" fill="#a5a5a5"/><path d="M13.500 2v11M17.500 2v11" stroke="#b8b8b8"/><path d="M8 2H5v4" fill="none" stroke="#c8c8c8" stroke-width="1.500"/><path d="M4.500 7.500v8M.5 11.500h8" stroke="#c8c8c8" stroke-width="2.600"/></svg>
        </div>
      </div>

      <!-- Brushes -->
      <div class="h-[177px] flex flex-col border-b-3 border-[#3c3c3c]">
        <div class="h-[34px] shrink-0 flex items-stretch bg-[#424242] border-b border-[#3a3a3a] font-bold text-[#a0a0a0]">
          <button class="w-[68px] -mb-px bg-[#535353] text-white">Brushes</button>
          <button class="w-[63px] -ml-px border-r border-[#3a3a3a]">Stroke</button>
          <button class="w-[74px] border-r border-[#3a3a3a]">Symbols</button>
          <button class="ml-auto mr-[7px] text-[#a5a5a5]" aria-label="Brushes menu"><svg class="w-[13px] h-2.5"><use href="#burger"/></svg></button>
        </div>
        <div class="ml-[7px] mr-[7px] mt-2 h-[108px] flex border border-[#656565] overflow-hidden">
          <div class="flex-1 flex flex-col gap-px">
            <div class="shrink-0 flex gap-px">
              <div class="size-10 bg-[#e1e1e1] flex items-center justify-center"><div class="size-[7px] rounded-full bg-black"></div></div>
              <div class="size-10 bg-[#e1e1e1] flex items-center justify-center"><div class="size-[19px] rounded-full bg-black"></div></div>
              <div class="size-10 bg-[#e1e1e1] flex items-center justify-center"><div class="w-1 h-0.5 rounded-full bg-black -rotate-12"></div></div>
              <div class="size-10 bg-[#e1e1e1] flex items-center justify-center"><div class="w-1.5 h-[3px] rounded-full bg-black rotate-12"></div></div>
              <div class="size-10 bg-[#e1e1e1] flex items-center justify-center"><div class="w-px h-1.5 bg-[#aaa]"></div></div>
              <div class="size-10 bg-[#e1e1e1] flex items-center justify-center"><div class="size-[15px] rounded-full bg-black"></div></div>
            </div>
            <div class="shrink-0 h-10 pl-[5px] pr-1.5 flex items-center gap-1.5 bg-[#e1e1e1] text-[#111]"><div class="flex-1 h-[3px] bg-black"></div>Basic</div>
            <div class="shrink-0 h-10 px-1 pt-[13px] bg-[#e1e1e1] border-2 border-black outline outline-white"><svg class="w-full h-2"><use href="#charcoal"/></svg></div>
          </div>
          <div class="ml-[2px] w-[15px] flex flex-col items-center bg-[#4b4b4b] text-[#a0a0a0]">
            <svg class="mt-0.5 size-2.5"><use href="#up"/></svg>
            <div class="mt-[3px] w-3 h-8 rounded-full bg-[#626262]"></div>
            <svg class="mt-auto mb-1 size-2.5"><use href="#down"/></svg>
          </div>
        </div>
        <div class="flex-1 flex items-center pl-[13px] pr-[35px] text-[#b8b8b8]">
          <svg class="w-[20px] h-[14px]" viewBox="0 0 20 14" fill="currentColor"><path d="M0 1h2.500v13H0zM4 0h3.500v14H4zM8.500 1l3-1 4 13-3 1z"/><path d="M15.500 11h4l-2 2.500z"/></svg>
          <svg class="ml-3 w-[22px] h-[17px]" viewBox="0 0 22 17"><path d="M0 0h6l2 2h8v3H7l-3 8H0z" fill="currentColor"/><rect x="6" y="5.500" width="15.500" height="11" rx="5.500" fill="#535353" stroke="currentColor" stroke-width="1.500"/><g fill="none" stroke="currentColor" stroke-width="1.500"><circle cx="11.500" cy="11" r="2.800"/><circle cx="16" cy="11" r="2.800"/></g></svg>
          <svg class="ml-auto size-[15px] text-[#777]" viewBox="0 0 15 15" fill="none" stroke="currentColor"><path d="M0 1l14 14" stroke-width="1.500"/><path d="M15 0L6 9" stroke-width="2.500"/><path d="M6 8c-3 0-2 4-6 6 3 1 7 0 8-4z" fill="currentColor" stroke="none"/></svg>
          <svg class="ml-[18px] size-[15px] text-[#777]" viewBox="0 0 15 15" fill="none" stroke="currentColor"><path d="M.7.7h13.600v13.600H.7z" stroke-width="1.400"/><path d="M1 2h13" stroke-width="2.500"/><path d="M3 6h2M3 9h2M3 12h2M6 6h6M6 9h6M6 12h6" stroke-width="1.400"/></svg>
          <svg class="ml-[19px] size-[14px] text-[#d0d0d0]" viewBox="0 0 14 14" fill="none" stroke="currentColor" stroke-width="1.400"><path d="M.7.7h12.600v12.600H.7zM7 4v6M4 7h6"/></svg>
          <svg class="ml-[18px] w-[13px] h-[15px] text-[#c8c8c8]" viewBox="0 0 13 15" fill="none" stroke="currentColor" stroke-width="1.300"><path d="M0 3h13M4 3V.8h5V3M1.800 3v11.300h9.400V3M4.500 5v7M6.500 5v7M8.500 5v7"/></svg>
        </div>
      </div>

      <!-- Layers -->
      <div class="flex-1 border-b-2 border-[#3c3c3c]">
        <div class="h-[34px] flex items-stretch bg-[#424242] border-b border-[#3a3a3a] font-bold">
          <button class="w-[60px] -mb-px bg-[#535353] text-white">Layers</button>
          <button class="ml-auto mr-[7px] text-[#a5a5a5]" aria-label="Layers menu"><svg class="w-[13px] h-2.5"><use href="#burger"/></svg></button>
        </div>
      </div>
    </aside>
  </main>

  <!-- Windows taskbar -->
  <footer class="h-[50px] shrink-0 flex items-stretch bg-[#1d1d1d] text-white text-[16px]">
    <button class="w-[60px] flex items-center justify-center" aria-label="Start"><svg class="size-5" viewBox="0 0 20 20" fill="#fff"><path d="M0 3l8.500-1.300v7.800H0zM9.500 1.500L20 0v9.500H9.500zM0 10.500h8.500v7.800L0 17zM9.500 10.500H20V20L9.500 18.500z"/></svg></button>
    <label class="w-[430px] flex items-center bg-[#f2f2f2] text-[#333] border border-[#ccc]">
      <svg class="ml-3.5 size-[22px]" viewBox="0 0 22 22" fill="none" stroke="#222" stroke-width="1.600"><circle cx="14" cy="8" r="6.500"/><path d="M9.500 12.500L1 21"/></svg>
      <input class="ml-[13px] flex-1 text-[17px] outline-none placeholder:text-[#333]" aria-label="Search" placeholder="Type here to search" />
    </label>
    <button class="w-[60px] flex items-center justify-center" aria-label="Cortana"><svg class="size-5" viewBox="0 0 20 20"><circle cx="10" cy="10" r="8.500" fill="none" stroke="#fff" stroke-width="2.500"/></svg></button>
    <button class="w-[60px] flex items-center justify-center" aria-label="Task view"><svg class="size-5" viewBox="0 0 20 20" fill="none" stroke="#fff" stroke-width="1.400"><path d="M1 0v3h12V0M1 6h12v8H1zM1 20v-3h12v3M18 0v5M18 10v10M16.500 7.500h3"/></svg></button>
    <button class="w-[65px] pl-[9px] pr-[5px] flex" aria-label="Edge"><span class="flex-1 flex items-center justify-center pt-[3px] border-b-3 border-[#76b9ed]">
      <svg class="size-8" viewBox="0 0 32 32"><defs><linearGradient id="eg1" x1="0" y1="0" x2="1" y2=".3"><stop offset="0" stop-color="#35a7e6"/><stop offset=".5" stop-color="#2fc3c9"/><stop offset="1" stop-color="#62dc4e"/></linearGradient><linearGradient id="eg2" x1="0" y1="0" x2="0" y2="1"><stop offset="0" stop-color="#1b9de2"/><stop offset="1" stop-color="#0c4a9e"/></linearGradient></defs><path d="M1 14C3 4 9 1 16 1c9 0 15 6 15 13 0 5-4 8-8 8s-6-2-4-4c2-3 0-7-5-7-7 0-12 2-13 6z" fill="url(#eg1)"/><path d="M1 14c2-4 6-5 10-5 5 0 8 3 8 6-1-1-3-1-5 1-5 4-2 12 4 14-9 3-17-4-17-14z" fill="url(#eg2)"/><path d="M11 20c0 6 5 9 10 8 4-1 7-3 9-6-3 2-9 3-13 1-2-1-4-3-4-6-1 1-2 2-2 3z" fill="#124f9c"/></svg></span>
    </button>
    <button class="w-[62px] flex items-center justify-center" aria-label="File Explorer"><svg class="w-7 h-6" viewBox="0 0 28 24"><path d="M0 2q0-2 2-2h8l3 3h15v8H0z" fill="#d99a1c"/><path d="M0 5h26q2 0 2 2v13q0 2-2 2H0z" fill="#ffd366"/><path d="M5 24v-8q0-3 3-3h12q3 0 3 3v8h-5v-5h-8v5z" fill="#3c8fd0"/></svg></button>
    <button class="w-[62px] flex items-center justify-center" aria-label="Store"><svg class="w-[30px] h-[30px]" viewBox="0 0 30 30"><path d="M9 7V3q0-2 2-2h8q2 0 2 2v4" fill="none" stroke="#35a7dd" stroke-width="2"/><path d="M1 6h28v19q0 4-4 4H5q-4 0-4-4z" fill="#f6f6f6"/><path d="M9 11h5.500v5.500H9z" fill="#f25022"/><path d="M15.500 11H21v5.500h-5.500z" fill="#7fba00"/><path d="M9 17.500h5.500V23H9z" fill="#00a4ef"/><path d="M15.500 17.500H21V23h-5.500z" fill="#ffb900"/></svg></button>
    <button class="w-[62px] flex items-center justify-center" aria-label="Mail"><svg class="w-[30px] h-7" viewBox="0 0 30 28"><path d="M0 9L15 0l15 9-8 9H8z" fill="#0f4f94"/><path d="M3 8h24v10H3z" fill="#f4f8fb"/><path d="M0 9l15 9L30 9v19H0z" fill="#2aa6e8"/><path d="M0 28l15-13 15 13z" fill="#1b86d4"/><path d="M30 9v19L15 18z" fill="#35b4f2"/></svg></button>
    <button class="w-[62px] px-[5px] flex" aria-label="Chrome"><span class="relative flex-1 flex items-center justify-center pt-[3px] border-b-3 border-[#76b9ed]">
      <svg class="w-8 h-8" viewBox="0 0 32 32"><circle cx="15" cy="15" r="14" fill="#fff"/><path d="M15 15L3 8a14 14 0 0 1 24 0z" fill="#ea4335"/><path d="M3 8l12 7v14A14 14 0 0 1 3 8z" fill="#34a853"/><path d="M15 29l8-14 4-7a14 14 0 0 1-12 21z" fill="#fbbc05"/><path d="M14 8h13a14 14 0 0 1 1.500 3H16z" fill="#fbbc05"/><circle cx="15" cy="15" r="6.800" fill="#fff"/><circle cx="15" cy="15" r="5.400" fill="#4285f4"/></svg>
      <span class="absolute right-2 bottom-1.5 size-5 rounded-full bg-[#d83b7d] text-[11px] leading-5 text-center text-white">R</span></span>
    </button>
    <button class="w-[62px] bg-[#484848] flex items-center justify-center border-b-3 border-[#76b9ed]" aria-label="Illustrator"><span class="size-7 rounded-md bg-[#330000] text-[#ff9a00] text-[15px] font-bold flex items-center justify-center">Ai</span></button>

    <div class="ml-auto flex items-center">
      <svg class="w-[29px] h-7" viewBox="0 0 29 28"><defs><linearGradient id="st" x1="0" y1="1" x2="1" y2="0"><stop offset="0" stop-color="#1e8a22"/><stop offset="1" stop-color="#86d20a"/></linearGradient></defs><path d="M0 19C10 16 15 12 20 6l-3-3L28 0v12l-4-3C18 16 10 20 0 22zM0 25l5-1v4H0zM8 23l4-1v6H8zM15 19l5-3v12h-5zM23 14l5-3v17h-5z" fill="url(#st)"/></svg>
      <span class="ml-[11px] text-[17px]">DOW</span>
      <span class="ml-[11px] text-[17px] text-[#2db52d]">+1.04%</span>
      <svg class="ml-[26px] w-[17px] h-[10px]" viewBox="0 0 17 10" fill="none" stroke="#fff" stroke-width="1.500"><path d="M1 9l7.500-8L16 9"/></svg>
      <svg class="ml-[21px] w-[21px] h-4" viewBox="0 0 21 16" fill="none" stroke="#fff" stroke-width="1.300"><path d="M6 4.500h13v9H4V9M19 7h1.500v4H19M0 3h5v3.500H0zM1 3V0M4 3V0M2.500 7v6"/><path d="M6.500 6h11v6h-11z" fill="#fff"/></svg>
      <svg class="ml-[22px] size-[17px]" viewBox="0 0 17 17" fill="none" stroke="#fff" stroke-width="1.300"><path d="M1 16C1 8 8 1 16 1" opacity=".6"/><path d="M5 16C5 10 10 5 16 5M9 16c0-4 3-7 7-7"/><circle cx="14.500" cy="14.500" r="1.700" fill="#fff" stroke="none"/></svg>
      <svg class="ml-5 w-[21px] h-[17px]" viewBox="0 0 21 17" fill="none" stroke="#fff" stroke-width="1.300"><path d="M1 6h3l4.500-4.500v14L4 11H1z"/><path d="M11 6q2 2.500 0 5M13.500 4q4 4.500 0 9"/><path d="M17 1.500q5 7 0 14" opacity=".5"/></svg>
      <div class="ml-4 w-[73px] text-center text-[14px] leading-[23px] whitespace-nowrap flex flex-col items-center"><span>10:24 AM</span><span>7/18/2023</span></div>
      <div class="relative ml-5 mr-[25px]">
        <svg class="w-5 h-[19px]" viewBox="0 0 20 19"><path d="M0 0h20v16H8l-4 3v-3H0z" fill="#fff"/><path d="M4 4.500h12M4 8h12M4 11.500h8" stroke="#222" stroke-width="1.400"/></svg>
        <span class="absolute left-[9px] top-[9px] size-5 rounded-full bg-[#333] border border-[#999] text-[12px] leading-[18px] text-center">2</span>
      </div>
      <div class="w-px h-full bg-[#555] mr-[5px]"></div>
    </div>
  </footer>

  <script>
    // flyout corner for tools that hold more tools
    document.querySelectorAll('#tools [data-more]').forEach((btn) => {
      const corner = document.createElement('span');
      corner.className = 'absolute right-[9px] bottom-[4px] size-1 bg-[#d0d0d0] [clip-path:polygon(100%_0,100%_100%,0_100%)]';
      btn.appendChild(corner);
    });
  </script>
</body>
</html>
